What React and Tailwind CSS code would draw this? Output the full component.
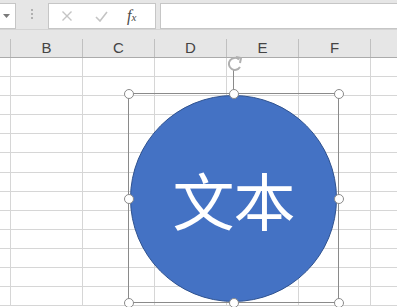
import React from 'react'

const cols = ['B', 'C', 'D', 'E', 'F', '']
const rows = Array.from({ length: 13 })

function Handle({ x, y }) {
  return (
    <div
      className="absolute w-[10px] h-[10px] rounded-full bg-white border-[1.5px] border-[#8a8a8a]"
      style={{ left: x - 5, top: y - 5 }}
    />
  )
}

export default function App() {
  return (
    <div className="relative w-[397px] h-[307px] overflow-hidden bg-white font-['Liberation_Sans',sans-serif]">
      {/* formula bar */}
      <div className="flex h-[30px] bg-[#e6e6e6] pt-[3px] border-b border-[#d4d4d4]">
        <div className="w-[16px] h-[26px] bg-white border border-l-0 border-[#c6c6c6] flex items-center justify-center pr-[3px]">
          <svg width="7" height="4" viewBox="0 0 7 4"><path d="M0 0h7L3.5 4z" fill="#7a7a7a" /></svg>
        </div>
        <div className="w-[32px] flex flex-col items-center justify-center gap-[2px] pb-[4px]">
          <span className="w-[2px] h-[2px] bg-[#b0b0b0]" />
          <span className="w-[2px] h-[2px] bg-[#b0b0b0]" />
          <span className="w-[2px] h-[2px] bg-[#b0b0b0]" />
        </div>
        <div className="w-[108px] h-[26px] bg-white border border-[#c6c6c6] flex items-center">
          <svg className="ml-[12px]" width="12" height="12" viewBox="0 0 12 12">
            <path d="M1.5 1.5l9 9M10.5 1.5l-9 9" stroke="#c4c4c4" strokeWidth="1.4" />
          </svg>
          <svg className="ml-[22px]" width="13" height="11" viewBox="0 0 13 11">
            <path d="M1 6l4 4 7-9" stroke="#c4c4c4" strokeWidth="1.6" fill="none" />
          </svg>
          <span className="ml-[19px] text-[16px] leading-none italic text-[#4a4a4a] font-['Liberation_Serif',serif]">f<span className="text-[11px]">x</span></span>
        </div>
        <div className="ml-[4px] flex-1 h-[26px] bg-white border border-r-0 border-[#c6c6c6]" />
      </div>

      {/* column headers */}
      <div className="flex h-[28px] bg-[#e6e6e6] border-b border-[#ababab]">
        <div className="w-[11px] shrink-0 flex items-end">
          <div className="w-full h-[18px] border-r border-[#c0c0c0]" />
        </div>
        {cols.map((c, i) => (
          <div key={i} className="w-[72px] shrink-0 flex items-end">
            <div className="w-full h-[18px] border-r border-[#c0c0c0] flex items-center justify-center text-[15px] leading-none text-[#444] pb-[2px]">
              {c}
            </div>
          </div>
        ))}
      </div>

      {/* grid */}
      <div className="flex flex-col">
        {rows.map((_, r) => (
          <div key={r} className="flex h-[19.1px] border-b border-[#d6d6d6]">
            <div className="w-[11px] shrink-0 border-r border-[#d6d6d6]" />
            {cols.map((_, i) => (
              <div key={i} className="w-[72px] shrink-0 border-r border-[#d6d6d6]" />
            ))}
          </div>
        ))}
      </div>

      {/* shape selection */}
      <div className="absolute left-[128px] top-[93px] w-[211px] h-[210px] border border-[#8a8a8a]">
        <div className="absolute left-[1px] top-[1px] w-[207px] h-[207px] rounded-full bg-[#4472c4] border border-[#2f528f] flex items-center justify-center">
          <span className="text-white text-[62px] leading-none font-['Noto_Sans_CJK_SC',sans-serif] font-normal tracking-[-1px]">文本</span>
        </div>
      </div>

      {/* rotation handle */}
      <div className="absolute left-[233px] top-[70px] w-[1px] h-[19px] bg-[#8a8a8a]" />
      <svg className="absolute left-[225px] top-[55px]" width="20" height="18" viewBox="0 0 20 18">
        <path d="M14 4.5A6 6 0 1 0 15 12" stroke="#b0b0b0" strokeWidth="2" fill="none" />
        <path d="M11 2l5 1-1 5" stroke="#b0b0b0" strokeWidth="2" fill="none" />
      </svg>

      <Handle x={128.5} y={93.5} />
      <Handle x={233.5} y={93.5} />
      <Handle x={338.5} y={93.5} />
      <Handle x={128.5} y={198.5} />
      <Handle x={338.5} y={198.5} />
      <Handle x={128.5} y={302.5} />
      <Handle x={233.5} y={302.5} />
      <Handle x={338.5} y={302.5} />
    </div>
  )
}
